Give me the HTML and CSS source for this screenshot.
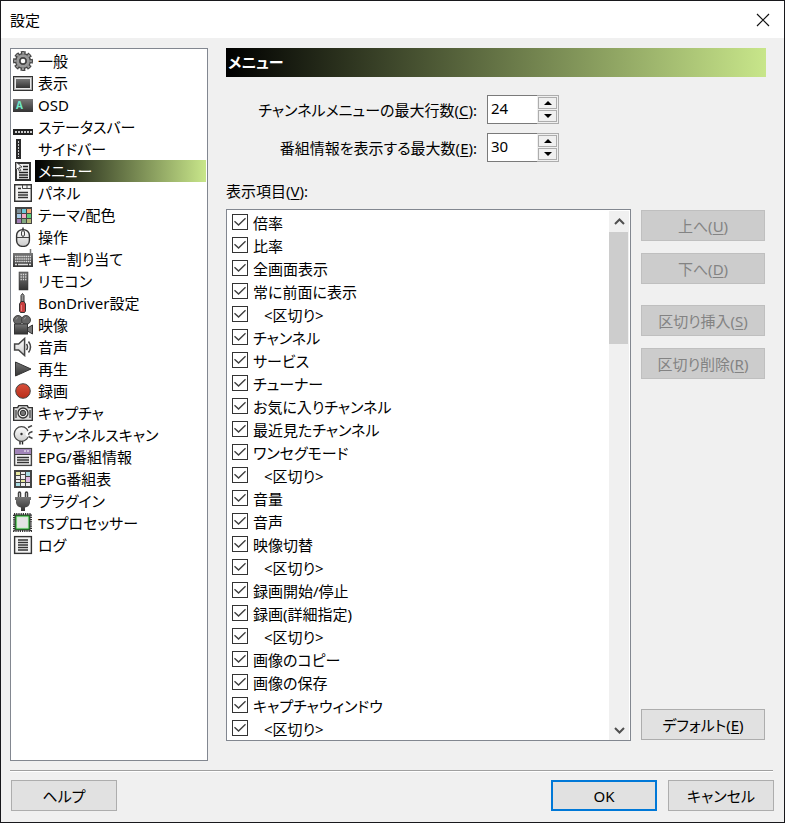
FILE: index.html
```html
<!DOCTYPE html>
<html lang="ja">
<head>
  <meta charset="UTF-8">
  <meta name="viewport" content="width=device-width, initial-scale=1.0">
  <title>設定</title>
  <link rel="stylesheet" href="styles.css">
</head>
<body>
  <!-- Gradients shared by the icons -->
  <svg class="defs" width="0" height="0" aria-hidden="true">
    <defs>
      <linearGradient id="dark" x1="0" y1="0" x2="0" y2="1"><stop offset="0" stop-color="#777"/><stop offset="1" stop-color="#333"/></linearGradient>
      <linearGradient id="light" x1="0" y1="0" x2="0" y2="1"><stop offset="0" stop-color="#fff"/><stop offset="1" stop-color="#ccc"/></linearGradient>
      <linearGradient id="red" x1="0" y1="0" x2="0" y2="1"><stop offset="0" stop-color="#d8503c"/><stop offset="1" stop-color="#b82c18"/></linearGradient>
    </defs>
  </svg>

  <div class="window">
    <header class="titlebar">
      <h1>設定</h1>
      <button class="close" aria-label="閉じる">
        <svg width="14" height="14" viewBox="0 0 14 14"><path d="M1 1l12 12M13 1L1 13" stroke="#111" stroke-width="1.2"/></svg>
      </button>
    </header>

    <main class="content">
      <ul class="nav" role="listbox" aria-label="設定">
        <li role="option">
          <svg class="icon" viewBox="0 0 20 20"><g fill="none"><circle cx="10" cy="10" r="8" stroke="#444" stroke-width="4" stroke-dasharray="4.4 1.883" stroke-dashoffset="2.2"/><circle cx="10" cy="10" r="5.4" stroke="#444" stroke-width="5.4"/><circle cx="10" cy="10" r="7.8" stroke="#999" stroke-width="2.2" stroke-dasharray="2.2 3.926" stroke-dashoffset="1.1"/><circle cx="10" cy="10" r="5.3" stroke="#999" stroke-width="3"/><circle cx="10" cy="10" r="3" fill="#fff" stroke="#444" stroke-width="1.400"/></g></svg>
          <span>一般</span></li>
        <li role="option">
          <svg class="icon" viewBox="0 0 20 20"><rect y="3" width="20" height="15" fill="#333"/><rect x="1" y="4" width="18" height="13" fill="#aaa"/><rect x="2" y="5" width="16" height="11" fill="#e8e8e8"/><rect x="3" y="6" width="14" height="9" fill="url(#dark)"/></svg>
          <span>表示</span></li>
        <li role="option">
          <svg class="icon" viewBox="0 0 20 20"><rect y="4" width="20" height="13" fill="url(#dark)"/><text class="osd-letter" x="3" y="14">A</text></svg>
          <span>OSD</span></li>
        <li role="option">
          <svg class="icon" viewBox="0 0 20 20"><rect y="12" width="20" height="6" fill="#222"/><path d="M2 15h17" stroke="#ccc" stroke-width="2" stroke-dasharray="2 1"/></svg>
          <span>ステータスバー</span></li>
        <li role="option">
          <svg class="icon" viewBox="0 0 20 20"><rect x="3" width="5" height="20" fill="#2a2a2a"/><path d="M5.500 2v16" stroke="#ccc" stroke-width="1" stroke-dasharray="2 1"/></svg>
          <span>サイドバー</span></li>
        <li role="option" class="selected" aria-selected="true">
          <svg class="icon" viewBox="0 0 20 20"><rect x="3" y="2" width="14" height="17" fill="#eee" stroke="#333" stroke-width="2"/><path d="M10 5.500h5M10 8.500h5M6 11.500h9M6 14h9M6 16.500h9" stroke="#222" stroke-width="1.400"/><path d="M3 1l6 5-3 .4 1.800 3-1.500.8L5 7 3 9z" fill="#fff" stroke="#333" stroke-width=".8"/></svg>
          <span>メニュー</span></li>
        <li role="option">
          <svg class="icon" viewBox="0 0 20 20"><path d="M1.700 1.700H18.300v16.600H1.700z" fill="#f4f4f4" stroke="#333" stroke-width="1.400"/><path d="M9.500 2v3.500H18M14 2v3.500" fill="none" stroke="#444"/><path d="M5 5.500h3M5 9.500h10M5 12h10M5 14.500h10" stroke="#333" stroke-width="1.300"/></svg>
          <span>パネル</span></li>
        <li role="option">
          <svg class="icon" viewBox="0 0 20 20"><rect x="2" y="2" width="17" height="17" fill="#444"/><path fill="#7d8e98" d="M4 4h4v4H4z"/><path fill="#70c8d8" d="M9 4h4v4H9z"/><path fill="#f4a878" d="M14 4h4v4h-4z"/><path fill="#a8cce8" d="M4 9h4v4H4z"/><path fill="#f4a8c4" d="M9 9h4v4H9z"/><path fill="#60d078" d="M14 9h4v4h-4z"/><path fill="#a07cb4" d="M4 14h4v4H4z"/><path fill="#80a880" d="M9 14h4v4H9z"/><path fill="#b8b878" d="M14 14h4v4h-4z"/></svg>
          <span>テーマ/配色</span></li>
        <li role="option">
          <svg class="icon" viewBox="0 0 20 20"><path d="M10 3V.5" stroke="#333" stroke-width="1.500"/><rect x="3.600" y="2.600" width="12.800" height="16.800" rx="6" fill="url(#light)" stroke="#333" stroke-width="1.400"/><path d="M4 10.500h12M10 3v7" fill="none" stroke="#444"/><rect x="8.500" y="4" width="3" height="5" rx="1" fill="#eee" stroke="#444"/></svg>
          <span>操作</span></li>
        <li role="option">
          <svg class="icon" viewBox="0 0 20 20"><path d="M17.500 6V0" fill="none" stroke="#777" stroke-width="1.500"/><rect y="4" width="20" height="14" fill="url(#dark)"/><path d="M2 7.500h16M2 10h16M2 12.500h16" stroke="#ddd" stroke-width="1.500" stroke-dasharray="1.500 .6"/><path d="M2 15.500h2M5 15.500h10M16 15.500h2" stroke="#ddd" stroke-width="1.500"/></svg>
          <span>キー割り当て</span></li>
        <li role="option">
          <svg class="icon" viewBox="0 0 20 20"><rect x="6" y="1" width="9" height="18" fill="url(#dark)" stroke="#333" stroke-width=".5"/><path d="M7.500 3.500h6M7.500 6h6M7.500 8.500h6" stroke="#ddd" stroke-width="1.300" stroke-dasharray="1.300 1"/></svg>
          <span>リモコン</span></li>
        <li role="option">
          <svg class="icon" viewBox="0 0 20 20"><path d="M8 9V2.500L9.500.5 11 2.500V9z" fill="#999" stroke="#333"/><path d="M6.500 11l1.500-2.500h3l1.500 2.500v7l-1 1.500h-4l-1-1.500z" fill="#c84040" stroke="#333"/><path d="M8.500 12v6" stroke="#e88080"/></svg>
          <span>BonDriver設定</span></li>
        <li role="option">
          <svg class="icon" viewBox="0 0 20 20"><circle cx="5" cy="5" r="4.500" fill="#666" stroke="#444"/><circle cx="13" cy="5" r="4.500" fill="#666" stroke="#444"/><path d="M3 4.500a2.500 2.500 0 012-2M11 4.500a2.500 2.500 0 012-2" stroke="#999" fill="none"/><rect x="1.500" y="9" width="13" height="10" fill="url(#dark)" stroke="#333"/><path d="M14.500 13l5-3v9l-5-3z" fill="#777" stroke="#333"/></svg>
          <span>映像</span></li>
        <li role="option">
          <svg class="icon" viewBox="0 0 20 20"><path d="M1.600 7h4l6-5.500v17L5.600 13h-4z" fill="url(#light)" stroke="#444" stroke-width="1.500"/><path d="M13.500 7q2 3 0 6M15.500 4.500q4 5.500 0 11" fill="none" stroke="#444" stroke-width="1.500"/></svg>
          <span>音声</span></li>
        <li role="option">
          <svg class="icon" viewBox="0 0 20 20"><path d="M2.500 3L18 10 2.500 17z" fill="url(#dark)" stroke="#333"/></svg>
          <span>再生</span></li>
        <li role="option">
          <svg class="icon" viewBox="0 0 20 20"><circle cx="10" cy="10" r="7.300" fill="url(#red)" stroke="#444"/></svg>
          <span>録画</span></li>
        <li role="option">
          <svg class="icon" viewBox="0 0 20 20"><path d="M.7 4.600h4l1-2h8.600l1 2h4v12.800H.7z" fill="#ddd" stroke="#333" stroke-width="1.400"/><path d="M3 7v8M17 7v8" stroke="#777" stroke-width="2"/><circle cx="10" cy="10" r="5" fill="#eee" stroke="#333" stroke-width="1.300"/><circle cx="10" cy="10" r="2.700" fill="#777" stroke="#333"/></svg>
          <span>キャプチャ</span></li>
        <li role="option">
          <svg class="icon" viewBox="0 0 20 20"><path d="M7 16v3.500M9.500 16v3.500" stroke="#222" stroke-width="1.400"/><circle cx="8.500" cy="9" r="7.300" fill="url(#light)" stroke="#444" stroke-width="1.300"/><circle cx="8.500" cy="9" r="1.200" fill="#333"/><path d="M13 9l4-3.500M13 9l4 3.500" stroke="#fff" stroke-width="2"/><path d="M15 2.500l4-2M16 8l3.500-1.500M15.500 11.500l4 2" stroke="#444" stroke-width="1.400"/></svg>
          <span>チャンネルスキャン</span></li>
        <li role="option">
          <svg class="icon" viewBox="0 0 20 20"><rect x="1.600" y="1.600" width="16.800" height="16.800" fill="#f4f4f4" stroke="#444" stroke-width="1.400"/><rect x="2" y="2" width="16" height="5" fill="#a084b8"/><path d="M11 4h2M14 4h2" stroke="#fff"/><path d="M2 7.500h16" stroke="#444"/><path d="M4 10.500h12M4 13h12M4 15.500h12" stroke="#333" stroke-width="1.300"/></svg>
          <span>EPG/番組情報</span></li>
        <li role="option">
          <svg class="icon" viewBox="0 0 20 20"><rect x="1" y="1" width="18" height="18" fill="#444"/><path fill="#eee" d="M8 6h4v4H8zM3 7h4v3H3zM13 14h4v3h-4z"/><path fill="#e8e8a0" d="M3 3h4v3H3zM8 11h4v2H8z"/><path fill="#a8dce4" d="M13 3h4v4h-4zM3 14h4v3H3z"/><path fill="#dcb8e0" d="M13 8h4v5h-4z"/><path fill="#eee" d="M8 3h4v2H8zM8 14h4v3H8zM3 11h4v2H3z"/></svg>
          <span>EPG番組表</span></li>
        <li role="option">
          <svg class="icon" viewBox="0 0 20 20"><path d="M6.500 7V2M13.500 7V2" stroke="#444" stroke-width="3.500" stroke-linecap="round"/><path d="M6.500 6V2M13.500 6V2" stroke="#bbb"/><path d="M2 6h16v3h-1v3q-1 4-5 4.500V20H8v-3.500Q4 16 3 12V9H2z" fill="url(#dark)"/></svg>
          <span>プラグイン</span></li>
        <li role="option">
          <svg class="icon" viewBox="0 0 20 20"><rect x="1" y="1" width="17" height="17" fill="none" stroke="#333" stroke-width="2" stroke-dasharray="1.200 1"/><rect x="2" y="2" width="15" height="15" fill="#18a020" stroke="#333"/><rect x="4" y="4" width="11" height="11" fill="#e4e4e4" stroke="#c8ecc8"/></svg>
          <span>TSプロセッサー</span></li>
        <li role="option">
          <svg class="icon" viewBox="0 0 20 20"><rect x="1.600" y="1.600" width="16.800" height="16.800" fill="#f4f4f4" stroke="#333" stroke-width="1.400"/><path d="M5 5h10M5 7.500h10M5 10h10M5 12.500h10M5 15h10" stroke="#333" stroke-width="1.300"/></svg>
          <span>ログ</span></li>
      </ul>

      <section class="page">
        <h2>メニュー</h2>

        <div class="fields">
          <label for="max-rows">チャンネルメニューの最大行数(<u>C</u>):</label>
          <div class="spin">
            <input type="text" id="max-rows" value="24">
            <div class="arrows">
              <button aria-label="増やす"><i class="up"></i></button>
              <button aria-label="減らす"><i class="down"></i></button>
            </div>
          </div>
          <label for="max-info">番組情報を表示する最大数(<u>E</u>):</label>
          <div class="spin">
            <input type="text" id="max-info" value="30">
            <div class="arrows">
              <button aria-label="増やす"><i class="up"></i></button>
              <button aria-label="減らす"><i class="down"></i></button>
            </div>
          </div>
        </div>

        <p class="list-title" id="items-title">表示項目(<u>V</u>):</p>

        <div class="items-row">
          <div class="items" role="group" aria-labelledby="items-title">
            <div class="checks">
              <label><input type="checkbox" checked>倍率</label>
              <label><input type="checkbox" checked>比率</label>
              <label><input type="checkbox" checked>全画面表示</label>
              <label><input type="checkbox" checked>常に前面に表示</label>
              <label class="sep"><input type="checkbox" checked>&lt;区切り&gt;</label>
              <label><input type="checkbox" checked>チャンネル</label>
              <label><input type="checkbox" checked>サービス</label>
              <label><input type="checkbox" checked>チューナー</label>
              <label><input type="checkbox" checked>お気に入りチャンネル</label>
              <label><input type="checkbox" checked>最近見たチャンネル</label>
              <label><input type="checkbox" checked>ワンセグモード</label>
              <label class="sep"><input type="checkbox" checked>&lt;区切り&gt;</label>
              <label><input type="checkbox" checked>音量</label>
              <label><input type="checkbox" checked>音声</label>
              <label><input type="checkbox" checked>映像切替</label>
              <label class="sep"><input type="checkbox" checked>&lt;区切り&gt;</label>
              <label><input type="checkbox" checked>録画開始/停止</label>
              <label><input type="checkbox" checked>録画(詳細指定)</label>
              <label class="sep"><input type="checkbox" checked>&lt;区切り&gt;</label>
              <label><input type="checkbox" checked>画像のコピー</label>
              <label><input type="checkbox" checked>画像の保存</label>
              <label><input type="checkbox" checked>キャプチャウィンドウ</label>
              <label class="sep"><input type="checkbox" checked>&lt;区切り&gt;</label>
            </div>
            <div class="scrollbar">
              <button aria-label="上へスクロール"><svg width="11" height="8" viewBox="0 0 11 8"><path d="M1 6l4.500-4.500L10 6" fill="none" stroke="#505050" stroke-width="2"/></svg></button>
              <div class="track"><div class="thumb"></div></div>
              <button aria-label="下へスクロール"><svg width="11" height="8" viewBox="0 0 11 8"><path d="M1 2l4.500 4.500L10 2" fill="none" stroke="#505050" stroke-width="2"/></svg></button>
            </div>
          </div>

          <div class="actions">
            <button class="btn" disabled>上へ(<u>U</u>)</button>
            <button class="btn" disabled>下へ(<u>D</u>)</button>
            <button class="btn group" disabled>区切り挿入(<u>S</u>)</button>
            <button class="btn" disabled>区切り削除(<u>R</u>)</button>
            <button class="btn last">デフォルト(<u>E</u>)</button>
          </div>
        </div>
      </section>
    </main>

    <footer class="footer">
      <button class="btn help">ヘルプ</button>
      <button class="btn default">OK</button>
      <button class="btn">キャンセル</button>
    </footer>
  </div>
</body>
</html>
```

FILE: styles.css
```css
* {
  box-sizing: border-box;
}

body {
  margin: 0;
  color: #000;
}

body,
button,
input {
  font-family: "Noto Sans", "Noto Sans CJK JP", sans-serif;
  font-size: 15px;
  line-height: 22px;
  font-feature-settings: "palt";
}

u {
  text-underline-offset: 2px;
}

.defs {
  position: absolute;
}

.window {
  display: flex;
  flex-direction: column;
  min-height: 100vh;
  border: 1px solid #18181c;
  background: #f0f0f0;
}

/* Title bar */
.titlebar {
  display: flex;
  justify-content: space-between;
  align-items: center;
  height: 37px;
  padding: 0 14px 0 9px;
  background: #fff;
}

.titlebar h1 {
  margin: 0;
  font-size: 15px;
  font-weight: normal;
}

.close {
  display: flex;
  padding: 0;
  border: none;
  background: none;
}

/* Main area */
.content {
  display: flex;
  flex: 1;
  gap: 18px;
  margin: 0 11px 0 9px;
  padding: 10px 0 9px;
  border-bottom: 1px solid #a0a0a0;
  box-shadow: 0 1px #fff;
}

.nav {
  flex: none;
  width: 198px;
  margin: 0;
  padding: 1px;
  border: 1px solid #828790;
  background: #fff;
  list-style: none;
}

.nav li {
  display: flex;
  align-items: center;
  gap: 2px;
  height: 22px;
  padding-left: 1px;
}

.nav span {
  flex: 1;
  padding-left: 3px;
  white-space: nowrap;
}

.selected span {
  background: linear-gradient(to right, #000, #c8e68a);
  color: #fff;
}

.icon {
  flex: none;
  width: 20px;
  height: 20px;
}

.osd-letter {
  font-size: 10px;
  font-weight: bold;
  fill: #70e8c8;
}

/* Settings page */
.page {
  display: flex;
  flex-direction: column;
  flex: 1;
  min-width: 0;
  padding: 0 7px 20px 0;
}

.page h2 {
  margin: 0;
  padding: 0 2px;
  background: linear-gradient(to right, #000, #c8e68a);
  color: #fff;
  font-size: 15px;
  font-weight: bold;
  line-height: 29px;
}

.fields {
  display: grid;
  grid-template-columns: 251px 72px;
  gap: 9px 10px;
  align-items: center;
  padding-top: 18px;
}

.fields label {
  text-align: right;
  white-space: nowrap;
}

.spin {
  display: flex;
  height: 29px;
  border: 1px solid #adadad;
}

.spin input {
  flex: 1;
  min-width: 0;
  margin: -1px 0 -1px -1px;
  padding: 0 3px 4px;
  border: 1px solid #7a7a7a;
  border-right: none;
  background: #fff;
}

.arrows {
  display: flex;
  flex-direction: column;
  gap: 1px;
  width: 21px;
  padding: 1px;
}

.arrows button {
  display: flex;
  flex: 1;
  justify-content: center;
  align-items: center;
  padding: 0;
  border: 1px solid #adadad;
  background: #f0f0f0;
}

.up,
.down {
  border: 4px solid transparent;
}

.up {
  border-top: none;
  border-bottom-color: #000;
}

.down {
  border-bottom: none;
  border-top-color: #000;
}

.list-title {
  margin: 18px 0 7px;
}

.items-row {
  display: flex;
  flex: 1;
  gap: 10px;
}

.items {
  display: flex;
  flex: 1;
  padding: 1px 1px 0;
  border: 1px solid #828790;
  background: #fff;
}

.checks {
  flex: 1;
  padding-left: 4px;
}

.checks label {
  display: flex;
  align-items: center;
  gap: 5px;
  height: 23px;
  white-space: nowrap;
}

.checks .sep {
  gap: 16px;
}

.checks input {
  display: flex;
  justify-content: center;
  flex: none;
  width: 16px;
  height: 16px;
  margin: 0 0 1px;
  border: 1px solid #333;
  background: #fff;
  appearance: none;
}

.checks input:checked::before {
  content: "";
  width: 12px;
  height: 10px;
  margin-top: 2px;
  background: #404040;
  clip-path: polygon(0 48%, 8% 38%, 38% 70%, 92% 8%, 100% 18%, 38% 90%);
}

.scrollbar {
  display: flex;
  flex-direction: column;
  width: 20px;
  background: #f0f0f0;
}

.scrollbar button {
  display: flex;
  justify-content: center;
  align-items: center;
  height: 21px;
  padding: 0;
  border: none;
  background: none;
}

.track {
  flex: 1;
}

.thumb {
  width: 19px;
  height: 23%;
  background: #cdcdcd;
}

/* Buttons */
.btn {
  height: 31px;
  padding: 0;
  border: 1px solid #adadad;
  background: #e1e1e1;
  color: #000;
}

.btn:disabled {
  border-color: #bfbfbf;
  background: #ccc;
  color: #838383;
}

.actions {
  display: flex;
  flex-direction: column;
  gap: 12px;
  width: 125px;
  padding: 1px 1px 1px 0;
}

.actions .group {
  margin-top: 9px;
}

.actions .last {
  margin-top: auto;
}

.footer {
  display: flex;
  gap: 11px;
  padding: 9px 10px 11px;
}

.footer .btn {
  width: 106px;
}

.footer .help {
  margin-right: auto;
}

.footer .default {
  border: 2px solid #0078d7;
}
```
